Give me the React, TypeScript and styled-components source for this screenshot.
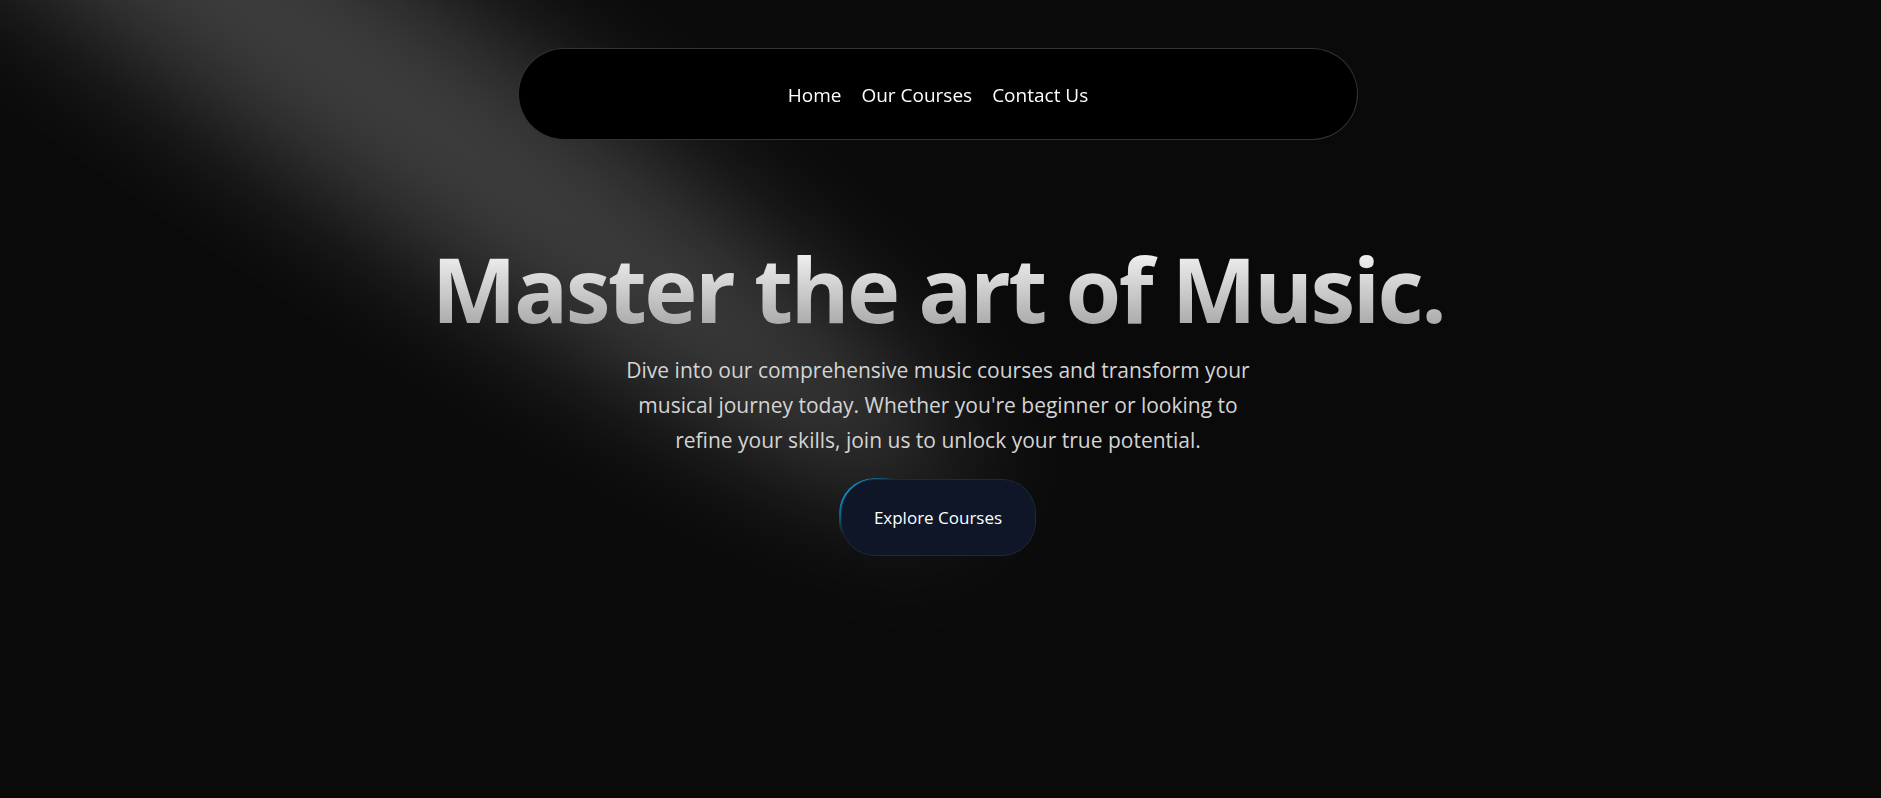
import React from "react";
import styled, { createGlobalStyle } from "styled-components";

const Global = createGlobalStyle`
  html, body { margin: 0; padding: 0; background: #0a0a0a; overflow: hidden; }
  * { box-sizing: border-box; }
  body { font-family: "Open Sans", "Noto Sans", sans-serif; -webkit-font-smoothing: antialiased; }
`;

const Page = styled.main`
  position: relative;
  width: 100%;
  height: 800px;
  padding-right: 5px;
  background: #0a0a0a;
  overflow: hidden;
  display: flex;
  flex-direction: column;
  align-items: center;
  justify-content: center;
`;

const SpotSvg = styled.svg`
  position: absolute;
  left: 0;
  top: 0;
  width: 1881px;
  height: 800px;
  pointer-events: none;
  z-index: 1;
`;

const Nav = styled.nav`
  position: fixed;
  top: 48px;
  left: 0;
  right: 5px;
  margin: 0 auto;
  width: 840px;
  height: 92px;
  z-index: 50;
  background: #000;
  border: 1.5px solid rgba(255, 255, 255, 0.2);
  border-radius: 9999px;
  display: flex;
  align-items: center;
  justify-content: center;
  gap: 20px;
  padding: 0 40px;
`;

const NavItem = styled.a`
  color: #fff;
  font-size: 19px;
  line-height: 30px;
  padding-top: 2px;
  cursor: pointer;
  text-decoration: none;
`;

const Content = styled.div`
  position: relative;
  z-index: 10;
  width: 100%;
  padding: 20px;
  text-align: center;
  display: flex;
  flex-direction: column;
  align-items: center;
`;

const Title = styled.h1`
  margin: 0;
  font-size: 90px;
  line-height: 90px;
  font-weight: 700;
  letter-spacing: -2.6px;
  background: linear-gradient(to bottom, #fafafa, #a3a3a3);
  -webkit-background-clip: text;
  background-clip: text;
  color: transparent;
`;

const Lead = styled.p`
  margin: 20px auto 0;
  max-width: 640px;
  font-size: 21px;
  line-height: 35px;
  font-weight: 400;
  color: #d4d4d4;
`;

const ButtonWrap = styled.div`
  margin-top: 20px;
`;

const MovingButton = styled.a`
  position: relative;
  display: block;
  width: 198px;
  height: 80px;
  padding: 1.5px;
  border-radius: 35px;
  overflow: hidden;
  cursor: pointer;
  text-decoration: none;
`;

const Glow = styled.span`
  position: absolute;
  inset: 0;
  border-radius: 35px;
  background: radial-gradient(circle at 18px 18px, rgba(14, 165, 233, 0.95) 0, rgba(14, 165, 233, 0.6) 22px, transparent 42px);
`;

const ButtonInner = styled.span`
  position: relative;
  display: flex;
  align-items: center;
  justify-content: center;
  width: 100%;
  height: 100%;
  border-radius: 34px;
  background: #0e1628;
  border: 1px solid #1e293b;
  color: #fff;
  font-size: 17px;
`;

function Spotlight() {
  return (
    <SpotSvg viewBox="0 0 1881 800" preserveAspectRatio="none">
      <defs>
        <filter id="spotBlur" x="-50%" y="-50%" width="200%" height="200%">
          <feGaussianBlur stdDeviation="63" />
        </filter>
      </defs>
      <ellipse
        cx="0"
        cy="0"
        rx="803"
        ry="114"
        fill="white"
        fillOpacity="0.21"
        filter="url(#spotBlur)"
        transform="translate(300 36) rotate(34.7)"
      />
    </SpotSvg>
  );
}

export default function App() {
  return (
    <>
      <Global />
      <Page>
        <Spotlight />
        <Nav>
          <NavItem>Home</NavItem>
          <NavItem>Our Courses</NavItem>
          <NavItem>Contact Us</NavItem>
        </Nav>
        <Content>
          <Title>Master the art of Music.</Title>
          <Lead>
            Dive into our comprehensive music courses and transform your musical journey today. Whether you're beginner or looking to refine your skills, join us to unlock your true potential.
          </Lead>
          <ButtonWrap>
            <MovingButton>
              <Glow />
              <ButtonInner>Explore Courses</ButtonInner>
            </MovingButton>
          </ButtonWrap>
        </Content>
      </Page>
    </>
  );
}
